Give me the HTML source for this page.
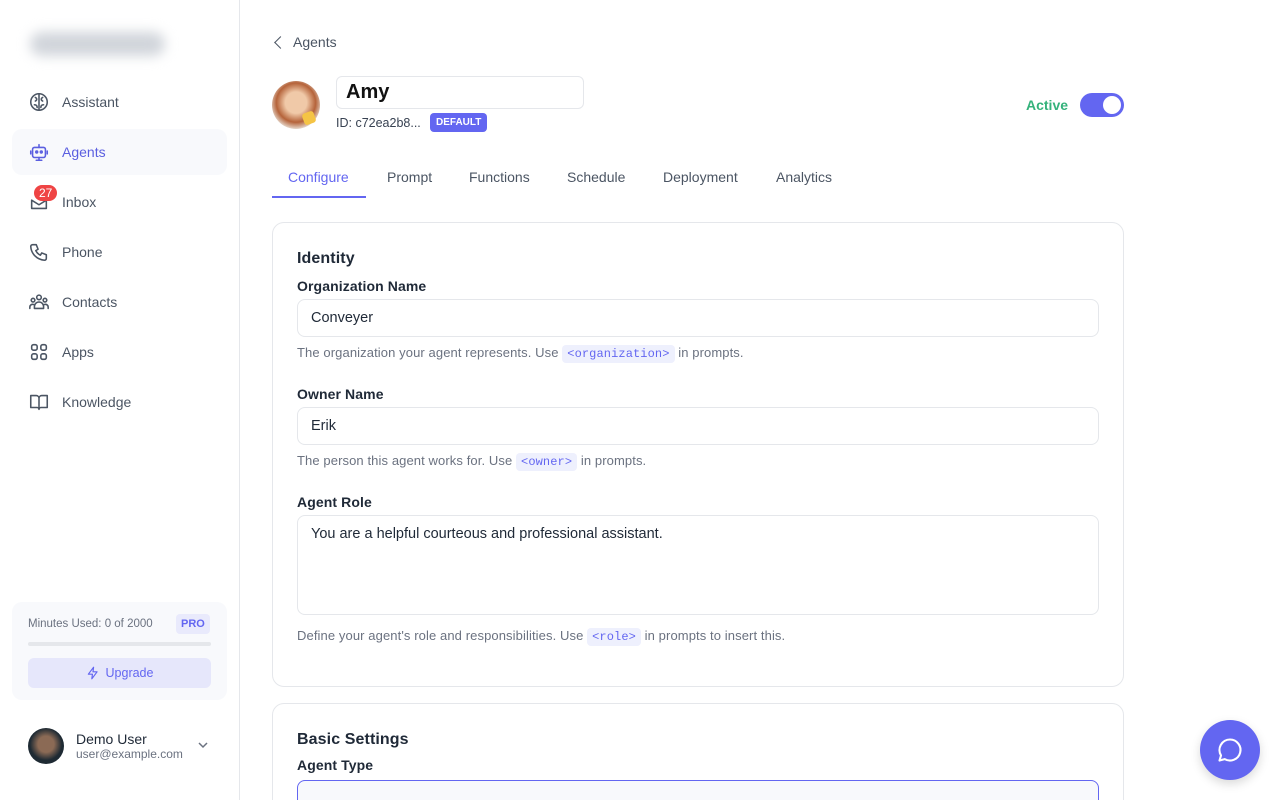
<!DOCTYPE html>
<html><head><meta charset="utf-8"><style>
*{box-sizing:border-box;margin:0;padding:0}
html{width:1280px;height:800px;overflow:hidden}
body{width:1280px;height:800px;overflow:hidden;background:#fff;font-family:"Liberation Sans",sans-serif;color:#1f2937;position:relative}
.sb{position:absolute;left:0;top:0;width:240px;height:800px;border-right:1px solid #e5e7eb;background:#fff}
.logo{position:absolute;left:30px;top:32px;width:135px;height:24px;border-radius:12px;background:#d1d5db;filter:blur(6px)}
.nav{position:absolute;left:12px;width:215px;height:46px;border-radius:10px;display:flex;align-items:center;padding-left:16px;font-size:14px;color:#4b5563}
.nav svg{width:22px;height:22px;margin-right:12px;stroke:#4b5563;fill:none;stroke-width:1.7;stroke-linecap:round;stroke-linejoin:round}
.nav.act{background:#f8f9fc;color:#5b5fe0}.nav.act svg{stroke:#5b5fe0}
.badge{position:absolute;left:22px;top:6px;background:#ef4444;color:#fff;font-size:12px;border-radius:9px;padding:1px 5px}
.usage{position:absolute;left:12px;top:602px;width:215px;height:98px;background:#f8f9fc;border-radius:10px}
.card{position:absolute;left:272px;width:852px;border:1px solid #e5e7eb;border-radius:12px;background:#fff;overflow:hidden}
.lbl{position:absolute;left:24px;font-size:14px;font-weight:600;color:#1f2937;letter-spacing:.1px}
.inp{position:absolute;left:24px;width:802px;height:38px;border:1px solid #e5e7eb;border-radius:8px;padding:0 13px;line-height:36px;font-size:14.5px;color:#1f2937}
.help{position:absolute;left:24px;font-size:13px;color:#6b7280;letter-spacing:.1px}
code{font-family:"Liberation Mono",monospace;font-size:12px;color:#6366f1;background:#eef0fd;border-radius:4px;padding:2px 5px}
.tab{position:absolute;top:169px;font-size:14px;color:#4b5563}
</style></head><body>
<div class="sb">
<div class="logo"></div>
<div class="nav" style="top:79px"><svg viewBox="0 0 24 24"><circle cx="12" cy="12" r="9"/><path d="M12 3v18M8 7c2 1 2 3 0 4M16 7c-2 1-2 3 0 4M7 15c2 0 3 1 3 3M17 15c-2 0-3 1-3 3"/></svg>Assistant</div>
<div class="nav act" style="top:129px"><svg viewBox="0 0 24 24"><rect x="5" y="7" width="14" height="11" rx="2"/><path d="M12 4v3M3 11v3M21 11v3M9 21h6M12 18v3"/><circle cx="9.5" cy="12" r="1"/><circle cx="14.5" cy="12" r="1"/></svg>Agents</div>
<div class="nav" style="top:179px"><svg viewBox="0 0 24 24"><path d="M4 10v9h16v-9M4 10l8 5 8-5"/></svg>Inbox<span class="badge">27</span></div>
<div class="nav" style="top:229px"><svg viewBox="0 0 24 24"><path d="M5 4h4l2 5-2.5 1.5a11 11 0 005 5L15 13l5 2v4a2 2 0 01-2 2A16 16 0 013 6a2 2 0 012-2"/></svg>Phone</div>
<div class="nav" style="top:279px"><svg viewBox="0 0 24 24"><circle cx="12" cy="7" r="2.5"/><circle cx="5.5" cy="10" r="2"/><circle cx="18.5" cy="10" r="2"/><path d="M7 19v-2a5 5 0 0110 0v2zM2 19v-1.5a3 3 0 014-2.8M22 19v-1.5a3 3 0 00-4-2.8"/></svg>Contacts</div>
<div class="nav" style="top:329px"><svg viewBox="0 0 24 24"><rect x="4" y="4" width="6" height="6" rx="2"/><rect x="14" y="4" width="6" height="6" rx="2"/><rect x="4" y="14" width="6" height="6" rx="2"/><rect x="14" y="14" width="6" height="6" rx="2"/></svg>Apps</div>
<div class="nav" style="top:379px"><svg viewBox="0 0 24 24"><path d="M3 5h6a3 3 0 013 3v12a2 2 0 00-2-2H3zM21 5h-6a3 3 0 00-3 3v12a2 2 0 012-2h7z"/></svg>Knowledge</div>
<div class="usage">
<div style="position:absolute;left:16px;top:16px;font-size:11.5px;color:#6b7280">Minutes Used: 0 of 2000</div>
<div style="position:absolute;left:164px;top:12px;background:#e9eafc;color:#6366f1;font-size:11px;font-weight:700;padding:4px 5px;border-radius:4px">PRO</div>
<div style="position:absolute;left:16px;top:40px;width:183px;height:4px;background:#e5e7eb;border-radius:2px"></div>
<div style="position:absolute;left:16px;top:56px;width:183px;height:30px;background:#e6e7fb;border-radius:6px;color:#6366f1;font-size:12.5px;display:flex;align-items:center;justify-content:center"><svg width="14" height="14" viewBox="0 0 24 24" fill="none" stroke="#6366f1" stroke-width="2" stroke-linejoin="round" style="margin-right:6px"><path d="M13 2L4 14h7l-1 8 9-12h-7z"/></svg>Upgrade</div>
</div>
<div style="position:absolute;left:28px;top:728px;width:36px;height:36px;border-radius:50%;background:radial-gradient(circle at 50% 45%,#8b6a55 0 30%,#1e2a33 60%)"></div>
<div style="position:absolute;left:76px;top:731px;font-size:14px;color:#1f2937">Demo User</div>
<div style="position:absolute;left:76px;top:747px;font-size:12px;color:#6b7280">user@example.com</div>
<svg style="position:absolute;left:197px;top:741px" width="12" height="8" viewBox="0 0 12 8" fill="none" stroke="#6b7280" stroke-width="1.5"><path d="M2 2l4 4 4-4"/></svg>
</div>

<div style="position:absolute;left:276px;top:34px;font-size:14px;color:#4b5563"><span style="display:inline-block;width:9px;height:9px;border-left:1.6px solid #4b5563;border-bottom:1.6px solid #4b5563;transform:rotate(45deg);margin-right:8px"></span>Agents</div>
<div style="position:absolute;left:272px;top:81px;width:48px;height:48px;border-radius:50%;background:radial-gradient(circle at 50% 45%,#f0c9a8 0 30%,#b5633a 55%,#e8ddd2 75%)"></div>
<div style="position:absolute;left:303px;top:112px;width:12px;height:12px;background:#f5c445;border-radius:3px;transform:rotate(-20deg)"></div>
<div style="position:absolute;left:336px;top:76px;width:248px;height:33px;border:1px solid #e5e7eb;border-radius:6px;padding-left:9px;font-size:20px;font-weight:700;line-height:31px;color:#111">Amy</div>
<div style="position:absolute;left:336px;top:116px;font-size:12.5px;color:#374151">ID: c72ea2b8...</div>
<div style="position:absolute;left:430px;top:113px;background:#6366f1;color:#fff;font-size:10px;font-weight:700;padding:4px 6px;border-radius:4px">DEFAULT</div>
<div style="position:absolute;left:1026px;top:97px;font-size:14px;color:#34b27b;font-weight:600">Active</div>
<div style="position:absolute;left:1080px;top:93px;width:44px;height:24px;border-radius:12px;background:#6366f1"><div style="position:absolute;right:3px;top:3px;width:18px;height:18px;border-radius:50%;background:#fff"></div></div>

<div class="tab" style="left:288px;color:#6366f1">Configure</div>
<div style="position:absolute;left:272px;top:196px;width:94px;height:2px;background:#6366f1"></div>
<div class="tab" style="left:387px">Prompt</div>
<div class="tab" style="left:469px">Functions</div>
<div class="tab" style="left:567px">Schedule</div>
<div class="tab" style="left:663px">Deployment</div>
<div class="tab" style="left:776px">Analytics</div>

<div class="card" style="top:222px;height:465px">
<div class="lbl" style="top:27px;font-size:16px">Identity</div>
<div class="lbl" style="top:55px">Organization Name</div>
<div class="inp" style="top:76px">Conveyer</div>
<div class="help" style="top:122px">The organization your agent represents. Use <code>&lt;organization&gt;</code> in prompts.</div>
<div class="lbl" style="top:163px">Owner Name</div>
<div class="inp" style="top:184px">Erik</div>
<div class="help" style="top:230px">The person this agent works for. Use <code>&lt;owner&gt;</code> in prompts.</div>
<div class="lbl" style="top:271px">Agent Role</div>
<div class="inp" style="top:292px;height:100px;line-height:20px;padding-top:8px">You are a helpful courteous and professional assistant.</div>
<div class="help" style="top:405px">Define your agent's role and responsibilities. Use <code>&lt;role&gt;</code> in prompts to insert this.</div>
</div>
<div class="card" style="top:703px;height:120px">
<div class="lbl" style="top:27px;font-size:16px">Basic Settings</div>
<div class="lbl" style="top:53px">Agent Type</div>
<div class="inp" style="top:76px;border-color:#6366f1;background:#f8f9fc"></div>
</div>
<div style="position:absolute;left:1200px;top:720px;width:60px;height:60px;border-radius:50%;background:#6366f1;box-shadow:0 4px 10px rgba(0,0,0,.15)">
<svg viewBox="0 0 24 24" width="28" height="28" style="position:absolute;left:16px;top:16px" fill="none" stroke="#fff" stroke-width="1.8" stroke-linejoin="round"><path d="M12 3a9 9 0 11-4.5 16.8L3 21l1.3-4.3A9 9 0 0112 3z"/></svg></div>
</body></html>
